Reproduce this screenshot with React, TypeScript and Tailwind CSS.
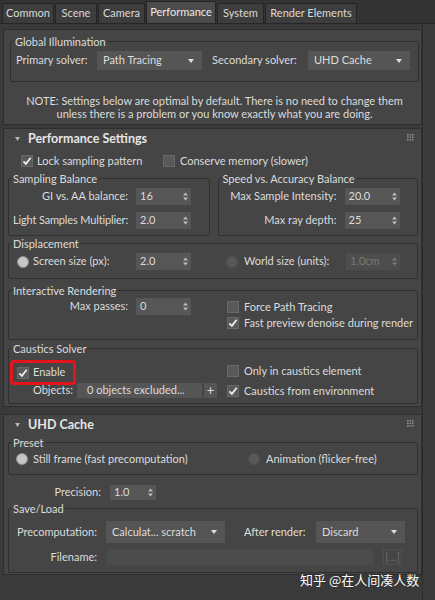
import React from "react";

function Check({ on = false }: { on?: boolean }) {
  return (
    <span className="flex h-[12px] w-[12px] shrink-0 items-center justify-center border border-[#686868] bg-[#595959]">
      {on && (
        <svg width="10" height="10" viewBox="0 0 10 10">
          <path d="M1.4 5.3 L3.9 7.9 L8.7 1.7" fill="none" stroke="#ececec" strokeWidth="1.8" />
        </svg>
      )}
    </span>
  );
}

function Radio({ on = false }: { on?: boolean }) {
  return (
    <span
      className={
        on
          ? "h-[12px] w-[12px] shrink-0 rounded-full border border-[#8c8c8c] bg-[#c6c6c6]"
          : "h-[12px] w-[12px] shrink-0 rounded-full border border-[#515151] bg-[#585858]"
      }
    />
  );
}

function SpinArrows({ dim = false }: { dim?: boolean }) {
  const c = dim ? "#7a7a7a" : "#bdbdbd";
  return (
    <svg width="5" height="9" viewBox="0 0 5 9">
      <polygon points="2.5,0.5 5,3.5 0,3.5" fill={c} />
      <polygon points="0,5.5 5,5.5 2.5,8.5" fill={c} />
    </svg>
  );
}

function Spinner({ value, className = "", disabled = false }: { value: string; className?: string; disabled?: boolean }) {
  return (
    <div
      className={`flex shrink-0 items-center justify-between pl-[4px] pr-[3px] ${
        disabled ? "bg-[#4d4d4d] text-[#7a7a7a]" : "bg-[#565656]"
      } ${className}`}
    >
      <span>{value}</span>
      <SpinArrows dim={disabled} />
    </div>
  );
}

function Dropdown({ value, className = "" }: { value: string; className?: string }) {
  return (
    <div className={`flex shrink-0 items-center justify-between bg-[#555555] pl-[6px] pr-[8px] ${className}`}>
      <span>{value}</span>
      <svg width="6" height="4" viewBox="0 0 6 4">
        <polygon points="0,0 6,0 3,4" fill="#dedede" />
      </svg>
    </div>
  );
}

function Group({ label, className = "", children }: { label: string; className?: string; children?: React.ReactNode }) {
  return (
    <fieldset className={`rounded-[2px] border border-[#303030] ${className}`}>
      <legend className="ml-[3px] px-[1px] leading-[13px]">{label}</legend>
      {children}
    </fieldset>
  );
}

function Grip() {
  return (
    <svg width="7" height="7" viewBox="0 0 7 7" className="mt-[5px] self-start">
      {[0, 2.5, 5].map((x) =>
        [0, 2.5, 5].map((y) => <rect key={`${x}-${y}`} x={x} y={y} width="1.6" height="1.6" fill="#8a8a8a" />)
      )}
    </svg>
  );
}

function RolloutHeader({ title }: { title: string }) {
  return (
    <div className="flex h-[20px] items-center pl-[7px] pr-[4px]">
      <svg width="5" height="4" viewBox="0 0 5 4">
        <polygon points="0,0 5,0 2.5,4" fill="#b5b5b5" />
      </svg>
      <span className="ml-[8px] text-[12.5px] font-bold text-[#e6e6e6]">{title}</span>
      <div className="flex-1" />
      <Grip />
    </div>
  );
}

const tabs = [
  { name: "Common", w: "w-[52px]" },
  { name: "Scene", w: "w-[42px]" },
  { name: "Camera", w: "w-[47px]" },
  { name: "Performance", w: "w-[70px]", active: true },
  { name: "System", w: "w-[47px]" },
  { name: "Render Elements", w: "w-[92px]" },
];

function Tabs() {
  return (
    <div className="flex h-[24px] items-end gap-px border-b border-[#262626] bg-[#333333] pl-[2px]">
      {tabs.map((t) => (
        <div
          key={t.name}
          className={`flex items-center justify-center rounded-t-[2px] border border-b-0 border-[#242424] ${t.w} ${
            t.active ? "h-[22px] bg-[#4b4b4b] text-[#ececec]" : "h-[20px] bg-[#3d3d3d] text-[#dadada]"
          }`}
        >
          {t.name}
        </div>
      ))}
    </div>
  );
}

function GlobalPanel() {
  return (
    <div className="h-[96px] border border-[#2e2e2e] bg-[#454545] pl-[6px] pr-[2px]">
      <Group label="Global Illumination" className="mt-[5px] h-[47px]">
        <div className="mt-[3px] flex h-[19px] items-center pl-[5px]">
          <span className="w-[81px] shrink-0">Primary solver:</span>
          <Dropdown value="Path Tracing" className="h-full w-[105px]" />
          <span className="ml-[10px] w-[96px] shrink-0">Secondary solver:</span>
          <Dropdown value="UHD Cache" className="h-full w-[102px]" />
        </div>
      </Group>
      <div className="mt-[12px] text-center leading-[13px]">
        <div>NOTE: Settings below are optimal by default. There is no need to change them</div>
        <div>unless there is a problem or you know exactly what you are doing.</div>
      </div>
    </div>
  );
}

function PerformancePanel() {
  return (
    <div className="mt-[3px] h-[279px] border border-[#2e2e2e] bg-[#454545] pl-[4px] pr-[3px]">
      <RolloutHeader title="Performance Settings" />
      <div className="mt-[5px] flex h-[14px] items-center pl-[13px]">
        <div className="flex w-[142px] items-center gap-[4px]">
          <Check on />
          <span>Lock sampling pattern</span>
        </div>
        <div className="flex items-center gap-[5px]">
          <Check />
          <span>Conserve memory (slower)</span>
        </div>
      </div>

      <div className="mt-[4px] flex">
        <Group label="Sampling Balance" className="h-[64px] w-[202px]">
          <div className="mt-[3px] flex h-[17px] items-center">
            <span className="w-[119px] text-right">GI vs. AA balance:</span>
            <Spinner value="16" className="ml-[8px] h-full w-[55px]" />
          </div>
          <div className="mt-[7px] flex h-[17px] items-center">
            <span className="w-[119px] text-right tracking-[-0.15px]">Light Samples Multiplier:</span>
            <Spinner value="2.0" className="ml-[8px] h-full w-[55px]" />
          </div>
        </Group>
        <Group label="Speed vs. Accuracy Balance" className="ml-[8px] h-[64px] w-[201px]">
          <div className="mt-[3px] flex h-[17px] items-center">
            <span className="w-[118px] text-right">Max Sample Intensity:</span>
            <Spinner value="20.0" className="ml-[8px] h-full w-[55px]" />
          </div>
          <div className="mt-[7px] flex h-[17px] items-center">
            <span className="w-[118px] text-right">Max ray depth:</span>
            <Spinner value="25" className="ml-[8px] h-full w-[55px]" />
          </div>
        </Group>
      </div>

      <Group label="Displacement" className="mt-[1px] h-[42px]">
        <div className="mt-[3px] flex h-[17px] items-center">
          <div className="flex w-[119px] items-center gap-[4px] pl-[8px]">
            <Radio on />
            <span>Screen size (px):</span>
          </div>
          <Spinner value="2.0" className="ml-[8px] h-full w-[55px]" />
          <div className="ml-[35px] flex w-[120px] items-center gap-[6px]">
            <Radio />
            <span>World size (units):</span>
          </div>
          <Spinner value="1.0cm" disabled className="h-full w-[54px]" />
        </div>
      </Group>

      <Group label="Interactive Rendering" className="mt-[5px] h-[56px]">
        <div className="flex">
          <div className="w-[218px] shrink-0">
            <div className="mt-[1px] flex h-[17px] items-center">
              <span className="w-[119px] text-right">Max passes:</span>
              <Spinner value="0" className="ml-[8px] h-full w-[55px]" />
            </div>
          </div>
          <div className="mt-[3px] flex flex-col gap-[2px]">
            <div className="flex h-[14px] items-center gap-[5px]">
              <Check />
              <span>Force Path Tracing</span>
            </div>
            <div className="flex h-[14px] items-center gap-[5px]">
              <Check on />
              <span>Fast preview denoise during render</span>
            </div>
          </div>
        </div>
      </Group>

      <Group label="Caustics Solver" className="mt-[2px] h-[62px]">
        <div className="flex">
          <div className="w-[218px] shrink-0">
            <div className="ml-[1px] mt-[5px] flex h-[25px] w-fit items-center gap-[4px] rounded-[4px] border-[3px] border-[#e3141c] pl-[4px] pr-[8px]">
              <Check on />
              <span>Enable</span>
            </div>
            <div className="-mt-[2px] flex h-[15px] items-center pl-[24px]">
              <span className="w-[44px] shrink-0">Objects:</span>
              <div className="flex h-full w-[125px] items-center bg-[#555555] pl-[10px]">0 objects excluded...</div>
              <div className="ml-[2px] flex h-full w-[13px] items-center justify-center bg-[#555555] text-[13px]">+</div>
            </div>
          </div>
          <div className="mt-[9px] flex flex-col gap-[6px]">
            <div className="flex h-[14px] items-center gap-[5px]">
              <Check />
              <span>Only in caustics element</span>
            </div>
            <div className="flex h-[14px] items-center gap-[5px]">
              <Check on />
              <span>Caustics from environment</span>
            </div>
          </div>
        </div>
      </Group>
    </div>
  );
}

function UhdPanel() {
  return (
    <div className="mt-[7px] h-[161px] border border-[#2e2e2e] bg-[#454545] pl-[4px] pr-[3px]">
      <RolloutHeader title="UHD Cache" />
      <Group label="Preset" className="mt-[1px] h-[39px]">
        <div className="mt-[3px] flex h-[14px] items-center">
          <div className="flex w-[239px] items-center gap-[5px] pl-[7px]">
            <Radio on />
            <span>Still frame (fast precomputation)</span>
          </div>
          <div className="flex items-center gap-[6px]">
            <Radio />
            <span>Animation (flicker-free)</span>
          </div>
        </div>
      </Group>
      <div className="mt-[10px] flex h-[15px] items-center">
        <span className="w-[93px] text-right">Precision:</span>
        <Spinner value="1.0" className="ml-[9px] h-full w-[46px]" />
      </div>
      <Group label="Save/Load" className="mt-[2px] h-[71px]">
        <div className="mt-[6px] flex h-[22px] items-center">
          <span className="w-[88px] text-right">Precomputation:</span>
          <Dropdown value="Calculat... scratch" className="ml-[9px] h-full w-[119px]" />
          <span className="ml-[19px] w-[72px]">After render:</span>
          <Dropdown value="Discard" className="h-full w-[89px]" />
        </div>
        <div className="mt-[6px] flex h-[16px] items-center">
          <span className="w-[88px] text-right">Filename:</span>
          <div className="ml-[9px] h-full w-[268px] bg-[#4b4b4b]" />
          <div className="ml-[9px] flex h-full w-[19px] items-center justify-center border border-[#505050] text-[#6f6f6f]">
            [...]
          </div>
        </div>
      </Group>
    </div>
  );
}

export default function App() {
  return (
    <div className="relative h-[600px] w-[435px] overflow-hidden bg-[#3a3a3a] font-['Lato','Liberation_Sans',sans-serif] text-[11px] text-[#dcdcdc]">
      <Tabs />
      <div className="flex">
        <div className="w-[422px] shrink-0 pl-[3px] pt-[5px]">
          <GlobalPanel />
          <PerformancePanel />
          <UhdPanel />
        </div>
        <div className="h-[576px] flex-1 border-l border-[#2c2c2c] bg-[#3b3b3b]" />
      </div>
      <div className="absolute left-[300px] top-[570px] text-[13px] text-white font-['Noto_Sans_CJK_SC',sans-serif] [text-shadow:0_0_2px_rgba(0,0,0,0.5)]">
        知乎 @在人间凑人数
      </div>
    </div>
  );
}
